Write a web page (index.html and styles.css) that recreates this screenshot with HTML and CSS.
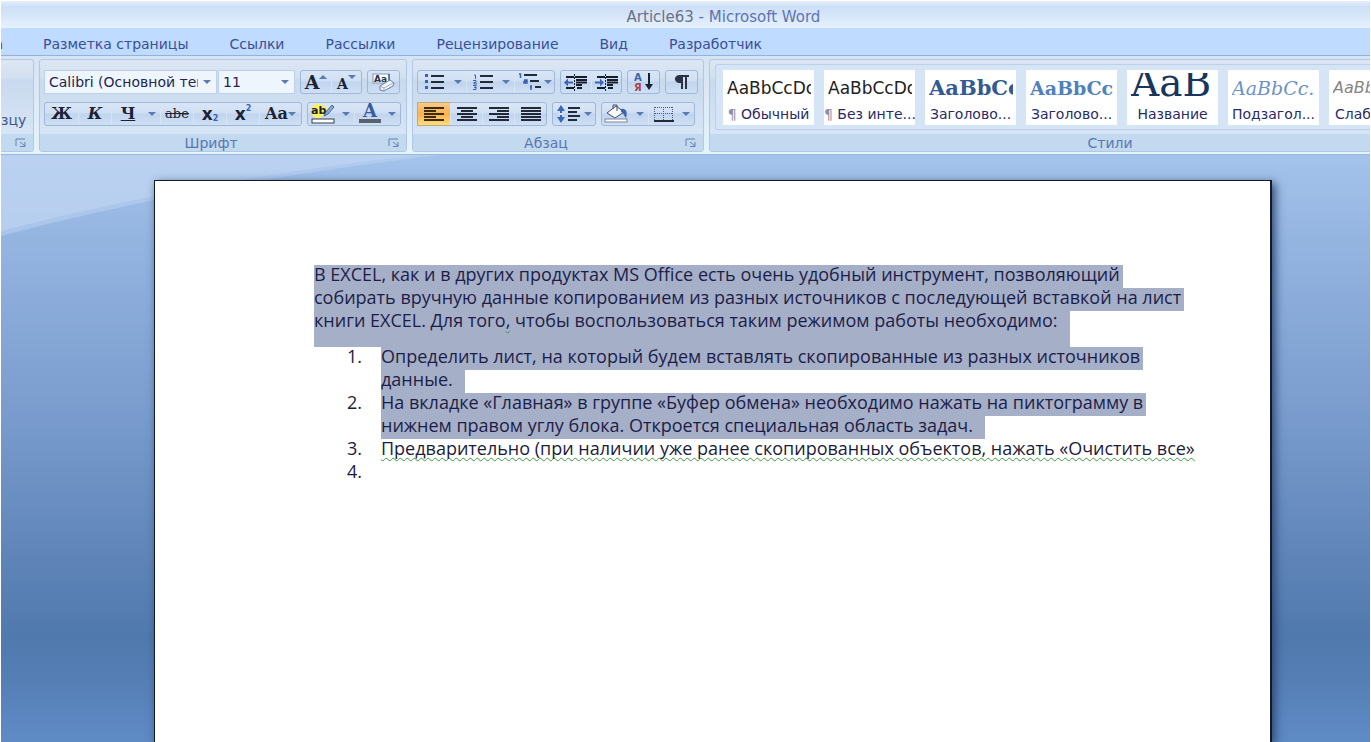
FILE: index.html
```html
<!DOCTYPE html>
<html lang="ru">
<head>
<meta charset="utf-8">
<title>Article63 - Microsoft Word</title>
<link rel="stylesheet" href="styles.css">
</head>
<body>
<div class="app">
  <header class="titlebar"><h1 class="title"><span class="title-doc">Article63</span> - Microsoft Word</h1></header>
  <nav class="tabs">
    <a class="tab tab-cut" href="#">а</a>
    <a class="tab" href="#">Разметка страницы</a>
    <a class="tab" href="#">Ссылки</a>
    <a class="tab" href="#">Рассылки</a>
    <a class="tab" href="#">Рецензирование</a>
    <a class="tab" href="#">Вид</a>
    <a class="tab" href="#">Разработчик</a>
  </nav>

  <div class="ribbon">
    <section class="group group-clip">
      <div class="body"><button class="painter">зцу</button></div>
      <footer class="label"><button class="launcher" aria-label="Буфер обмена"><svg width="12" height="10" viewBox="0 0 12 10"><path d="M1 8V1h9M5 4l5 4M10 4v4.500H5" fill="none" stroke="#6681ad"/></svg></button></footer>
    </section>

    <section class="group">
      <div class="body">
        <div class="row">
          <div class="combos">
            <div class="combo combo-font"><input aria-label="Шрифт" value="Calibri (Основной текст)"><button class="drop" aria-label="Список шрифтов"><i class="caret"></i></button></div>
            <div class="combo combo-size"><input aria-label="Размер" value="11"><button class="drop" aria-label="Список размеров"><i class="caret"></i></button></div>
          </div>
          <div class="set tight">
            <button class="btn"><span class="serif big">A</span><i class="caret caret-up"></i></button>
            <button class="btn"><span class="serif small">A</span><i class="caret raise"></i></button>
          </div>
          <div class="set single">
            <button class="btn" aria-label="Очистить формат"><svg width="27" height="20" viewBox="0 0 27 20"><rect x="3" y="2" width="16" height="9" fill="#fff" stroke="#8795ad"/><text x="4" y="10" font-family="DejaVu Sans" font-size="9" font-weight="bold" fill="#26304a">Aa</text><path d="M19 2v7" stroke="#26304a"/><path d="M10 14l10-6 4 3-1 3-9 5-4-1z" fill="#f2f5fb" stroke="#6f7d99"/><path d="M10 14l4 2 9-5M14 16v3" fill="none" stroke="#a1adc4"/></svg></button>
          </div>
        </div>
        <div class="row">
          <div class="set roomy">
            <button class="btn serif">Ж</button>
            <button class="btn serif"><em>К</em></button>
            <button class="btn serif"><u>Ч</u></button>
            <button class="btn arrow" aria-label="Подчеркивание"><i class="caret"></i></button>
            <button class="btn serif strike"><s>abe</s></button>
            <button class="btn cross">x<sub>2</sub></button>
            <button class="btn cross">x<sup>2</sup></button>
            <button class="btn wide serif case">Aa<i class="caret"></i></button>
          </div>
          <div class="set tight">
            <button class="btn" aria-label="Цвет выделения"><svg width="26" height="22" viewBox="0 0 26 22"><circle cx="8" cy="8" r="7" fill="#fbf25c"/><path d="M4 3h14v9H4z" fill="#fbf25c" opacity=".6"/><text x="1" y="11" font-family="DejaVu Sans" font-size="11" font-weight="bold" fill="#1b2233">ab</text><path d="M14 13l2-4 6-7 2 2-6 7z" fill="#90a9d8" stroke="#45639f"/><rect x="2" y="16" width="22" height="4" fill="#fff" stroke="#333c4c"/></svg></button>
            <button class="btn arrow" aria-label="Цвета выделения"><i class="caret"></i></button>
            <button class="btn" aria-label="Цвет текста"><svg width="26" height="22" viewBox="0 0 26 22"><text x="13" y="14" text-anchor="middle" font-family="DejaVu Serif" font-size="18" font-weight="bold" fill="#3a5b9e">A</text><path d="M2 16h22v4H2z" fill="#5a616e"/></svg></button>
            <button class="btn arrow" aria-label="Цвета текста"><i class="caret"></i></button>
          </div>
        </div>
      </div>
      <footer class="label">Шрифт<button class="launcher" aria-label="Параметры шрифта"><svg width="12" height="10" viewBox="0 0 12 10"><path d="M1 8V1h9M5 4l5 4M10 4v4.500H5" fill="none" stroke="#6681ad"/></svg></button></footer>
    </section>

    <section class="group">
      <div class="body">
        <div class="row">
          <div class="set">
            <button class="btn" aria-label="Маркеры"><svg width="20" height="16" viewBox="0 0 20 16"><path d="M7 2h13M7 8h13M7 14h13" stroke="#222a3a" stroke-width="2"/><path d="M1 0h3v3H1zM1 6h3v3H1zM1 12h3v3H1z" fill="#3c62ad"/></svg></button>
            <button class="btn arrow" aria-label="Виды маркеров"><i class="caret"></i></button>
            <button class="btn" aria-label="Нумерация"><svg width="20" height="16" viewBox="0 0 20 16"><path d="M7 2h13M7 8h13M7 14h13" stroke="#222a3a" stroke-width="2"/><path d="M1 1h1.500v4M0 6.500h3v2H1v1.500h3M0 11.500h3v4H0M1 13.500h2" fill="none" stroke="#3c62ad"/></svg></button>
            <button class="btn arrow" aria-label="Виды нумерации"><i class="caret"></i></button>
            <button class="btn list" aria-label="Многоуровневый список"><svg width="24" height="18" viewBox="0 0 24 18"><path d="M6 2h13M12 8h9M17 14h6" stroke="#222a3a" stroke-width="2"/><path d="M1 1h1.500v4M6 7h3v3H6V8.500h3M13 12v5M12 14h2" fill="none" stroke="#3c62ad" stroke-width="1.500"/></svg><i class="caret"></i></button>
          </div>
          <div class="set tight">
            <button class="btn" aria-label="Уменьшить отступ"><svg width="24" height="17" viewBox="0 0 24 17"><path d="M2 3h8M11 3h12M2 14h8M13 14h5M12 6h11M12 11h6" stroke="#161d2b" stroke-width="2"/><path d="M12 8.500h11" stroke="#161d2b" stroke-width="2"/><path d="M10.500 0v17" stroke="#161d2b" stroke-dasharray="2 1"/><path d="M0 8.500l4-4v3h5v2H4v3z" fill="#3c66b8"/></svg></button>
            <button class="btn" aria-label="Увеличить отступ"><svg width="24" height="17" viewBox="0 0 24 17"><path d="M2 3h8M11 3h12M2 14h8M13 14h5M12 6h11M12 11h6" stroke="#161d2b" stroke-width="2"/><path d="M12 8.500h11" stroke="#161d2b" stroke-width="2"/><path d="M10.500 0v17" stroke="#161d2b" stroke-dasharray="2 1"/><path d="M9 8.500l-4-4v3H0v2h5v3z" fill="#3c66b8"/></svg></button>
          </div>
          <div class="set single">
            <button class="btn" aria-label="Сортировка"><svg width="22" height="20" viewBox="0 0 22 20"><text x="1" y="9" font-family="DejaVu Sans" font-size="10" font-weight="bold" fill="#3c5fae">А</text><text x="1" y="19" font-family="DejaVu Sans" font-size="10" font-weight="bold" fill="#a84450">Я</text><path d="M16 1v14" stroke="#1a2130" stroke-width="2"/><path d="M12 12h8l-4 6z" fill="#1a2130"/></svg></button>
          </div>
          <div class="set single">
            <button class="btn" aria-label="Знаки абзаца"><svg width="16" height="15" viewBox="0 0 16 15"><path d="M15 0v2h-2v12h-2V2H9v12H7V8a5 4 0 0 1-2-8z" fill="#2b3242"/></svg></button>
          </div>
        </div>
        <div class="row">
          <div class="set">
            <button class="btn active" aria-label="По левому краю"><svg width="20" height="14" viewBox="0 0 20 14"><path d="M0 1h20M0 4h12M0 7h20M0 10h12M0 13h20" stroke="#3a2c10" stroke-width="2"/></svg></button>
            <button class="btn" aria-label="По центру"><svg width="20" height="14" viewBox="0 0 20 14"><path d="M0 1h20M4 4h12M0 7h20M4 10h12M0 13h20" stroke="#222a3a" stroke-width="2"/></svg></button>
            <button class="btn" aria-label="По правому краю"><svg width="20" height="14" viewBox="0 0 20 14"><path d="M0 1h20M8 4h12M0 7h20M8 10h12M0 13h20" stroke="#222a3a" stroke-width="2"/></svg></button>
            <button class="btn" aria-label="По ширине"><svg width="20" height="14" viewBox="0 0 20 14"><path d="M0 1h20M0 4h20M0 7h20M0 10h20M0 13h20" stroke="#222a3a" stroke-width="2"/></svg></button>
          </div>
          <div class="set">
            <button class="btn wide" aria-label="Интервал"><svg width="24" height="18" viewBox="0 0 24 18"><path d="M4 0l4 6H5v6h3l-4 6-4-6h3V6H0z" fill="#3c66b8"/><path d="M2 8h4v2H2z" fill="#dbe8f8"/><path d="M11 3h12M11 7h9M11 11h12M11 15h9" stroke="#222a3a" stroke-width="2"/></svg><i class="caret"></i></button>
          </div>
          <div class="set tight">
            <button class="btn" aria-label="Заливка"><svg width="26" height="20" viewBox="0 0 26 20"><path d="M3 9l9-7 8 6-9 6z" fill="#f7f9fd" stroke="#444e62"/><path d="M9 5V1h4v6" fill="none" stroke="#444e62"/><path d="M17 5c5-1 7 3 5 9-2-2-2-5-5-6z" fill="#3c62b4"/><rect x="1" y="15" width="22" height="3" fill="#fff" stroke="#7b859a"/></svg></button>
            <button class="btn arrow" aria-label="Цвета заливки"><i class="caret"></i></button>
            <button class="btn" aria-label="Границы"><svg width="20" height="16" viewBox="0 0 20 16"><path d="M1 1.500h18M1 7.500h18M.5 1v13M9.500 1v13M18.500 1v13" fill="none" stroke="#4c5a78" stroke-dasharray="1 1"/><path d="M0 15h20" stroke="#222a3a" stroke-width="2"/></svg></button>
            <button class="btn arrow" aria-label="Виды границ"><i class="caret"></i></button>
          </div>
        </div>
      </div>
      <footer class="label">Абзац<button class="launcher" aria-label="Параметры абзаца"><svg width="12" height="10" viewBox="0 0 12 10"><path d="M1 8V1h9M5 4l5 4M10 4v4.500H5" fill="none" stroke="#6681ad"/></svg></button></footer>
    </section>

    <section class="group group-styles">
      <div class="gallery">
        <button class="style"><span class="sample">AaBbCcDc</span><span class="name"><span class="mark">¶</span> Обычный</span></button>
        <button class="style"><span class="sample">AaBbCcDc</span><span class="name"><span class="mark">¶</span> Без инте...</span></button>
        <button class="style"><span class="sample h1">AaBbCc</span><span class="name">Заголово...</span></button>
        <button class="style"><span class="sample h2">AaBbCc</span><span class="name">Заголово...</span></button>
        <button class="style"><span class="sample head">AaB</span><span class="name">Название</span></button>
        <button class="style"><span class="sample sub">AaBbCc.</span><span class="name">Подзагол...</span></button>
        <button class="style"><span class="sample weak">AaBbCc</span><span class="name">Слабое в...</span></button>
      </div>
      <footer class="label">Стили</footer>
    </section>
  </div>

  <main class="desk">
    <svg class="glass" width="480" height="90" viewBox="0 0 480 90" aria-hidden="true"><path d="M0 0H440Q200 28 0 81z" fill="#bdd3f1" opacity=".5"/><path d="M0 0H420Q200 24 0 76z" fill="#c4d8f3" opacity=".5"/></svg>
    <article class="page">
      <p class="para">
        <span class="line"><mark>В EXCEL, как и в других продуктах MS Office есть очень удобный инструмент, позволяющий</mark></span>
        <span class="line"><mark>собирать вручную данные копированием из разных источников с последующей вставкой на лист</mark></span>
        <span class="line"><mark class="tall end">книги EXCEL. Для того<span class="gram">,</span> чтобы воспользоваться таким режимом работы необходимо:</mark></span>
      </p>
      <ol class="list">
        <li><span class="line"><mark>Определить лист, на который будем вставлять скопированные из разных источников</mark></span><span class="line"><mark class="end">данные.</mark></span></li>
        <li><span class="line"><mark>На вкладке «Главная» в группе «Буфер обмена» необходимо нажать на пиктограмму в</mark></span><span class="line"><mark class="end">нижнем правом углу блока. Откроется специальная область задач.</mark></span></li>
        <li><span class="line"><span class="plain gram">Предварительно (при наличии уже ранее скопированных объектов, нажать «Очистить все»</span></span></li>
        <li><span class="line"></span></li>
      </ol>
    </article>
  </main>
</div>
</body>
</html>
```

FILE: styles.css
```css
* { box-sizing: border-box; }
body {
  margin: 0;
  background: #fff;
  font-family: "DejaVu Sans", sans-serif;
  font-size: 14px;
  color: #1e2a5a;
}
button, input { font: inherit; color: inherit; }
button { margin: 0; padding: 0; border: 0; background: none; }
.app {
  display: flex;
  flex-direction: column;
  min-height: 100vh;
  padding: 1px 1px 0 1px;
  overflow: hidden;
}

.titlebar {
  display: flex;
  justify-content: center;
  align-items: center;
  height: 27px;
  padding: 4px 0 0 76px;
  background: linear-gradient(#e4effb 0, #cde0f7 6px, #d3e4f8 12px, #e6f1fd 100%);
}
.title { margin: 0; font-size: 15px; font-weight: 400; color: #5d73b4; }
.title-doc { color: #6a7288; }

.tabs {
  display: flex;
  align-items: center;
  gap: 41px;
  height: 28px;
  padding-top: 5px;
  background: #bfdbff;
  border-bottom: 1px solid #93b3dd;
}
.tab { color: #3a4f94; text-decoration: none; white-space: nowrap; }
.tab-cut { display: flex; justify-content: flex-end; width: 2px; margin-right: -1px; overflow: hidden; }

.ribbon {
  display: flex;
  gap: 5px;
  height: 99px;
  padding: 3px 0 2px;
  background: linear-gradient(#d5e3f3 0, #dce8f6 40%, #e3f4fd 100%);
  border-bottom: 1px solid #9ab8d8;
  overflow: hidden;
}
.group {
  display: flex;
  flex: none;
  flex-direction: column;
  border: 1px solid #b0c8e3;
  border-radius: 3px;
  background: linear-gradient(#dce7f4 0, #d2e0f0 18px, #c9daee 20px, #dbe9f8 100%);
}
.group-clip { width: 33px; border-left: 0; border-radius: 0 3px 3px 0; }
.group-styles { flex-basis: 802px; }
.body { display: flex; flex: 1; flex-direction: column; gap: 8px; padding: 10px 5px 0 4px; }
.row { display: flex; gap: 5px; height: 24px; }
.label {
  position: relative;
  height: 17px;
  flex: none;
  background: #c2d9f0;
  color: #5a77b0;
  line-height: 18px;
  text-align: center;
  border-radius: 0 0 3px 3px;
}
.label:has(.launcher) { padding-right: 24px; }
.launcher { position: absolute; right: 6px; top: 4px; line-height: 0; }
.painter { margin-top: 52px; padding-right: 9px; text-align: right; color: #3f568f; }
.group-clip .body { padding: 0; }

.combos { display: flex; gap: 1px; }
.combo { display: flex; background: #eef5fd; border: 1px solid #bdd0ea; }
.combo input {
  flex: 1;
  min-width: 0;
  padding: 0 0 0 4px;
  border: 0;
  background: none;
  color: #24264e;
}
.combo-font { width: 173px; }
.combo-size { width: 77px; }
.drop { display: flex; flex: none; align-items: center; justify-content: center; width: 18px; }

.set {
  display: flex;
  border: 1px solid #9fb8da;
  border-radius: 3px;
  background: linear-gradient(#d9e6f6 0, #cfdff3 45%, #c0d4ee 50%, #cfe0f5 100%);
}
.btn {
  display: flex;
  align-items: center;
  justify-content: center;
  width: 32px;
  border-left: 1px solid #d6e4f5;
  color: #1b2233;
}
.tight .btn { width: 30px; }
.single .btn { width: 31px; }
.roomy .btn { width: 33px; }
.btn:first-child { border-left: 0; }
.set .btn.arrow { width: 16px; border-left: 0; }
.set .btn.wide { width: 42px; gap: 3px; }
.set .btn.list { width: 40px; gap: 2px; }
.btn.active { background: linear-gradient(#f8c98a, #fbb14c 50%, #fdde7c); outline: 1px solid #c2a978; }
.serif { font-family: "DejaVu Serif", serif; font-weight: 700; font-size: 16px; line-height: 20px; }
.serif.small { font-size: 14px; padding-top: 4px; }
.serif.big { font-size: 19px; }
.serif.strike { font-size: 13px; font-weight: 400; }
.set .serif.case { font-size: 16px; gap: 0; }
.cross { font-weight: 700; font-size: 17px; }
.cross sub, .cross sup { font-size: 8px; color: #3c62ad; line-height: 8px; }
.cross sub { margin-top: 10px; }
.cross sup { margin-bottom: 10px; }
.caret {
  flex: none;
  width: 0;
  height: 0;
  border: 4px solid transparent;
  border-top-color: #5b7bb0;
  border-bottom-width: 0;
}
.caret-up { border-top-width: 0; border-bottom: 4px solid #5b7bb0; margin-bottom: 10px; }
.raise { margin-bottom: 10px; }

.gallery {
  display: flex;
  flex: 1;
  gap: 10px;
  margin: 4px 5px;
  padding: 5px 7px 4px;
  border: 1px solid #bcd1e9;
  border-radius: 2px;
  background: #d6e5f6;
  overflow: hidden;
}
.style {
  display: flex;
  flex: none;
  flex-direction: column;
  justify-content: space-between;
  width: 91px;
  padding: 3px 0 1px;
  background: #fff;
  overflow: hidden;
  white-space: nowrap;
  text-align: left;
}
.sample { display: block; width: 84px; height: 30px; margin-left: 4px; overflow: hidden; line-height: 30px; font-size: 17px; color: #222; }
.sample.h1 { font-family: "DejaVu Serif", serif; font-weight: 700; font-size: 21px; color: #345a94; }
.sample.h2 { font-family: "DejaVu Serif", serif; font-weight: 700; font-size: 19px; color: #4f81bd; }
.sample.head { font-family: "DejaVu Serif", serif; font-size: 39px; line-height: 20px; color: #17365d; }
.sample.sub { font-family: "DejaVu Serif", serif; font-style: italic; font-size: 19px; color: #6b93c8; }
.sample.weak { font-style: italic; font-size: 16px; color: #858585; }
.name { width: 100%; text-align: center; line-height: 20px; color: #2b2a66; }
.mark { color: #8a8fa8; }

.desk {
  position: relative;
  display: flex;
  flex: 1;
  padding: 25px 98px 0 153px;
  background: linear-gradient(#a4c3eb 0, #95b5e1 14%, #7b9ecf 42%, #6489bc 64%, #5079ad 82%, #567fb6 90%, #5f8bc5 100%);
}
.glass { position: absolute; left: 0; top: 0; }
.page {
  position: relative;
  flex: 1;
  min-width: 0;
  padding: 84px 60px 0 159px;
  background: #fff;
  border: 1px solid #141a28;
  border-width: 1px 2px 0 1px;
  box-shadow: 3px 3px 9px #2c4570;
  font-family: "Open Sans", sans-serif;
  font-size: 18px;
  color: #1b1c3c;
}
.para { margin: 0; }
.line { display: block; height: 23px; line-height: 23px; white-space: nowrap; }
.line:has(.tall) { height: 36px; }
.line mark, .plain { display: inline-block; height: 23px; padding-right: 3px; line-height: 19px; vertical-align: top; }
.line mark { background: #a6afc8; color: #1c1e48; }
.line mark.end { padding-right: 12px; }
.line mark.tall { height: 36px; }
.gram { text-decoration: underline wavy #3c9c3c 1px; text-underline-offset: 2px; text-decoration-skip-ink: none; }
.list { margin: 0; padding: 0; list-style: none; counter-reset: item; }
.list li { position: relative; padding-left: 67px; counter-increment: item; }
.list li::before { content: counter(item) "."; position: absolute; left: 33px; top: 0; line-height: 19px; }
```
